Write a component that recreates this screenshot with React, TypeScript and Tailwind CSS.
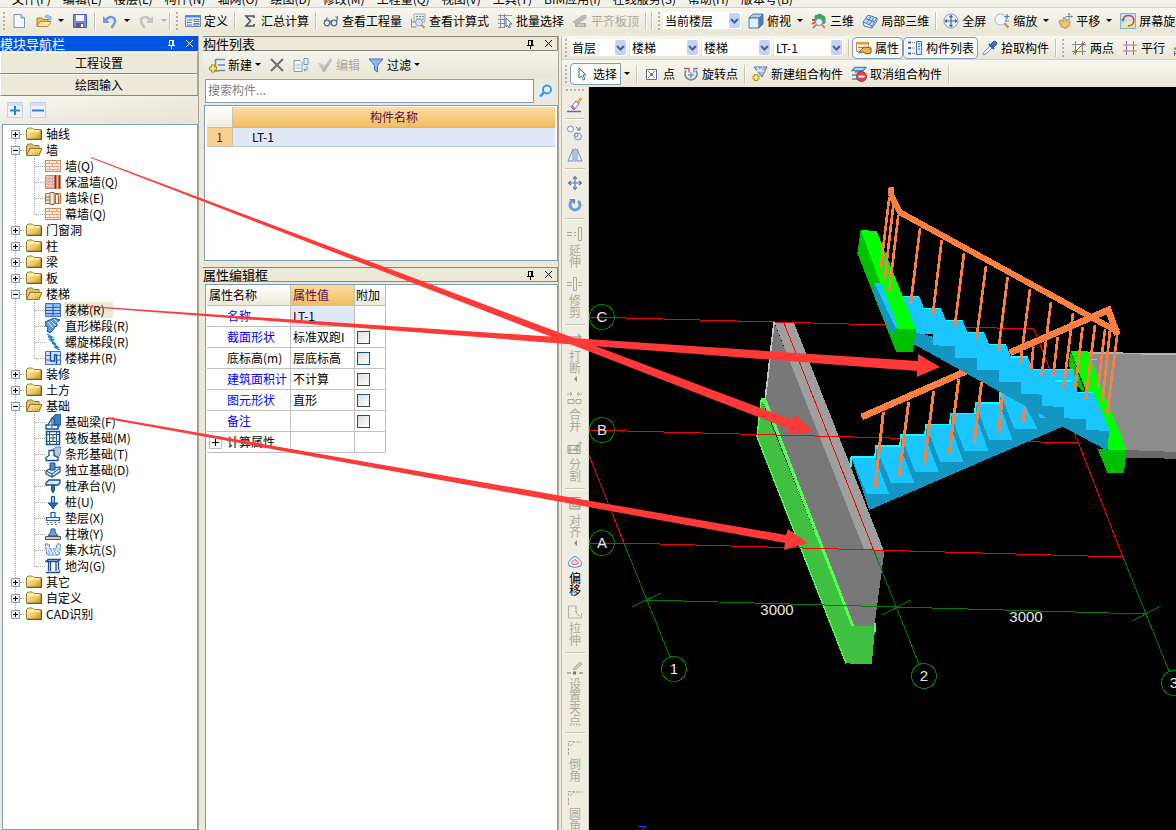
import { useState } from "react";
import type { ReactNode } from "react";
import clsx from "clsx";

const icons: Record<string, ReactNode> = {
  file: (
    <>
      <path d="M2 1.500h7l3.500 3.500v9.500H2z" fill="#f4f8ff" stroke="#7b93b5" />
      <path d="M9 1.500v3.500h3.500" fill="#c6d6ee" stroke="#7b93b5" />
    </>
  ),
  open: (
    <>
      <path d="M9 3c2-2 4-1 5 1l1-1v4h-4l1-1c-1-2-2-2-3-1z" fill="#9ec3e6" stroke="#6d8fb5" strokeWidth=".5" />
      <path d="M1 13v-8h5l1 1.500h5v6.500z" fill="#e7b95a" stroke="#a98135" />
      <path d="M1 13.500l3-5h11l-3 5z" fill="#ffe59a" stroke="#b98f3c" />
    </>
  ),
  save: (
    <>
      <path d="M1.500 1.500h13v13h-13z" fill="#7d85e0" stroke="#525ab0" />
      <path d="M4 2h8v6h-8z" fill="#f1f3ff" />
      <path d="M4 10h8v4h-8z" fill="#5a5f78" />
      <path d="M9 11h2v3h-2z" fill="#fff" />
    </>
  ),
  undo: (
    <>
      <path d="M4 7c3-4 9-4 9 1 0 3-2 4-3 6" fill="none" stroke="#6d9be0" strokeWidth="2.500" strokeLinecap="round" />
      <path d="M1 3v7h7z" fill="#6d9be0" />
    </>
  ),
  define: (
    <>
      <path d="M.5 2.500h15v11h-15z" fill="#e5edfa" stroke="#7489ad" />
      <path d="M.5 2.500h15v2h-15z" fill="#4c88e0" />
      <path d="M2 7h5M2 9.500h5M2 12h5" stroke="#5d77a8" />
      <path d="M9 6.500h5v2h-5zM9 10.500h5v1.500h-5z" fill="#fff" stroke="#5d77a8" />
    </>
  ),
  sigma: <path d="M12 5V3H4l4.500 5L4 13h8v-2" fill="none" stroke="#4a5060" strokeWidth="1.600" />,
  glasses: (
    <>
      <circle cx="4" cy="10" r="2.800" fill="#e8f0fa" stroke="#596a88" strokeWidth="1.300" />
      <circle cx="11" cy="10" r="2.800" fill="#e8f0fa" stroke="#596a88" strokeWidth="1.300" />
      <path d="M6.500 9q1-1 2 0M1.500 8.500l3-4M13.500 9l1-5h-2" fill="none" stroke="#596a88" strokeWidth="1.200" />
    </>
  ),
  formula: (
    <>
      <path d="M4 1h11v8h-11z" fill="#e9edf2" stroke="#a3a9b3" />
      <path d="M6 3.500h8M6 6h8" stroke="#7c838e" strokeDasharray="2 1" />
      <path d="M1.500 6v8h5M1.500 9h4" fill="none" stroke="#8a8f99" />
      <circle cx="9" cy="9.500" r="3.500" fill="#cfe2fb" stroke="#86a9dc" />
      <path d="M11.500 12l3 3" stroke="#d18a4a" strokeWidth="2" />
    </>
  ),
  batch: (
    <>
      <path d="M1 2.500h14M1 6.500h8M1 10.500h8M1 14.500h6M3.500 1v14M7.500 1v14" stroke="#8a93a5" />
      <path d="M9 5l6 6h-3l1.500 3-1.500 1-1.500-3-1.500 2z" fill="#fff" stroke="#5876ab" />
    </>
  ),
  flatTop: (
    <>
      <path d="M1 9l9-6 4-1v3l-9 6z" fill="#8f8c80" stroke="#716e64" />
      <path d="M3 10h11v4h-11z" fill="#716e64" />
      <path d="M5 12h7" stroke="#dedbd0" />
    </>
  ),
  cube: (
    <>
      <path d="M1 5l4-4h10l-4 4z" fill="#a9d1f5" stroke="#54789e" />
      <path d="M1 5h10v10H1z" fill="#e0effc" stroke="#54789e" />
      <path d="M11 5l4-4v10l-4 4z" fill="#4380bb" stroke="#54789e" />
    </>
  ),
  view3d: (
    <>
      <path d="M4 3l5-2 5 3v6l-5 2-5-3z" fill="#39a954" stroke="#4f9a63" />
      <path d="M1 7h3M1 11l5-3" stroke="#c9544b" strokeWidth="2" />
      <circle cx="8" cy="9" r="3.500" fill="#e6f2ff" stroke="#7a94b8" />
      <path d="M5.500 11.500L2 15M11 12l3 3" stroke="#c98a45" strokeWidth="2" />
    </>
  ),
  local3d: (
    <>
      <path d="M1 9l5-7 9 3-5 8z" fill="#bcd8f2" stroke="#4c7fb3" />
      <path d="M3.500 5.500l9 3.500M9 3.500l-4.500 7M12 4.500l-4.500 7M1 9l1 4 8 2v-2M10 15l5-7V5" fill="none" stroke="#4c7fb3" />
    </>
  ),
  fullscreen: (
    <>
      <circle cx="8" cy="8" r="7" fill="#e9f2fc" stroke="#7d99c2" />
      <path d="M8 2.500v11M2.500 8h11M6.500 4L8 2.500 9.500 4M6.500 12L8 13.500 9.500 12M4 6.500L2.500 8 4 9.500M12 6.500L13.500 8 12 9.500" fill="none" stroke="#3c669f" strokeWidth="1.200" />
    </>
  ),
  zoom: (
    <>
      <circle cx="6.500" cy="6.500" r="5.500" fill="#f2f7fd" stroke="#a6b3c6" />
      <path d="M10.500 10.500l4 4" stroke="#c7a162" strokeWidth="2.500" />
      <path d="M13 1v5M10.500 3.500h5M11 8h4" stroke="#4d7bbd" strokeWidth="1.200" />
    </>
  ),
  pan: (
    <>
      <path d="M2 8l2-1 2 2V5l2-.500 1 3 2-1 2 2-1 5-4 2-4-2z" fill="#e9c377" stroke="#b4935a" />
      <path d="M12 0v7M8.500 3.500h7M11 1.500l1-1 1 1M14.500 2.500l1 1-1 1" fill="none" stroke="#7186a8" />
    </>
  ),
  rotateView: (
    <>
      <path d="M.5.500h15v15H.500z" fill="#bfe6f5" stroke="#7db8d2" />
      <path d="M3 11h4V8h6v6H4z" fill="#f7e98a" />
      <path d="M3 7c1-6 10-6 11 0 0 4-3 6-6 6" fill="none" stroke="#e5413a" strokeWidth="1.600" />
      <path d="M1 6h4l-2 3z" fill="#e5413a" />
    </>
  ),
  props: (
    <>
      <path d="M.5 2.500h12v9H.500z" fill="#fbf3e0" stroke="#c88d3c" />
      <path d="M.5 2.500h12v2H.500z" fill="#e79a3a" />
      <path d="M2 7.500h5" stroke="#a98135" />
      <path d="M4 11l4-4 7 1v5l-5 1-3-2-4 1z" fill="#eab54f" stroke="#7c5a20" />
    </>
  ),
  list: (
    <>
      <path d="M1 2.500h3M1 8h3M1 13.500h3" stroke="#3d68a8" strokeWidth="2" />
      <path d="M5 2.500h3M5 8h3M5 13.500h3" stroke="#777" strokeDasharray="1 1" />
      <path d="M9.500 1.500h5v13h-5z" fill="#dbe7fa" stroke="#4472b5" />
      <path d="M11 4h2M11 6.500h2M11 9h2" stroke="#4472b5" />
    </>
  ),
  picker: (
    <>
      <path d="M1 15l1-3 7-7 2 2-7 7z" fill="#e3f0fc" stroke="#7497c4" />
      <path d="M7 4l5 5" stroke="#2f5d9c" strokeWidth="2" />
      <path d="M9 4l3-3q3 0 3 3l-3 3z" fill="#3f79c4" stroke="#2f5d9c" />
    </>
  ),
  twoPoint: (
    <>
      <path d="M4.500 1v14M11.500 1v14M1 4.500h14M1 11.500h14" stroke="#7c8499" />
      <path d="M2 14L14 2" stroke="#d0453b" />
      <circle cx="4.500" cy="11.500" r="1.500" fill="#3aa845" />
      <circle cx="11.500" cy="4.500" r="1.500" fill="#3aa845" />
    </>
  ),
  parallel: (
    <>
      <path d="M4.500 1v14M11.500 1v14" stroke="#6779a5" />
      <path d="M1 5h14M1 11h14" stroke="#c77878" />
    </>
  ),
  angle: (
    <>
      <path d="M1 8.500h3" stroke="#3cb54a" strokeWidth="2" />
      <path d="M1.500 11v5M2 13.500h10M5 12l-2 1.500L5 15" fill="none" stroke="#6b6b6b" />
    </>
  ),
  cursor: <path d="M5 2v10l2.500-2 2 4 1.500-1-2-4h3z" fill="#fff" stroke="#44689b" />,
  point: (
    <>
      <path d="M2.500 3.500h10v10h-10z" fill="#fff" stroke="#5b6ba0" />
      <path d="M4 5l7 7M11 5l-7 7" stroke="#7480b5" />
      <circle cx="7.500" cy="8.500" r="1.500" fill="#e04040" />
    </>
  ),
  rotatePoint: (
    <>
      <path d="M3 4.500a6 6 0 1 0 10 0" fill="none" stroke="#7688aa" strokeWidth="1.800" />
      <path d="M1 2.500h5v4" fill="none" stroke="#c05a4a" strokeWidth="1.300" />
      <path d="M15 2.500h-4v4" fill="none" stroke="#6d7fa3" strokeWidth="1.300" />
      <path d="M8 6v6M5 9h6" stroke="#4a76bb" />
    </>
  ),
  newGroup: (
    <>
      <path d="M2 1h13L10 11z" fill="#a9b9dd" stroke="#5c74a8" />
      <path d="M5 1l2.500 4L11 1M4.500 5h8" fill="none" stroke="#fff" />
      <path d="M4 8v7M.500 11.500h7" stroke="#b8912b" strokeWidth="4" />
      <path d="M4 9v5M1.500 11.500h5" stroke="#ffe676" strokeWidth="2" />
    </>
  ),
  cancelGroup: (
    <>
      <path d="M4 1.500h11l-3 3H1zM4 6h8M1 9h6M1 13h5" fill="#dcebfa" stroke="#4e88c0" strokeWidth="1.400" />
      <circle cx="10.500" cy="10.500" r="5" fill="#e04545" stroke="#b02c2c" />
      <path d="M7.500 10.500h6" stroke="#fff" strokeWidth="2" />
    </>
  ),
  newItem: (
    <>
      <path d="M7 2.500h9M9 8h7M9 13.500h7M6.500 2v12h3" fill="none" stroke="#6a8dbb" strokeWidth="1.500" />
      <path d="M4 7.500v8M0 11.500h8" stroke="#b3902e" strokeWidth="4" />
      <path d="M4 8.500v6M1 11.500h6" stroke="#ffe778" strokeWidth="2" />
    </>
  ),
  cross: <path d="M2 2l12 12M14 2L2 14" stroke="#6e6e6e" strokeWidth="2" />,
  copy: (
    <>
      <path d="M1 3.500h6l2 2v9H1z" fill="#f1f5fc" stroke="#8a9cbb" />
      <path d="M2.500 8h5M2.500 11h5" stroke="#9fb0cc" />
      <path d="M11 1.500h4v6h-4zM14 9v4h-3l1-1.500M11 13l1 1.500" fill="none" stroke="#6f94d6" />
    </>
  ),
  check: (
    <>
      <path d="M1 6l4 1 2 3L14 1l1 2-7 12H6z" fill="#8a877c" />
      <path d="M2 8h6M2 11h4" stroke="#c9c6ba" />
    </>
  ),
  filter: <path d="M1 2h14L9.500 8.500V15L6.500 13V8.500z" fill="#8fb6f2" stroke="#3f72c4" />,
  search: (
    <>
      <circle cx="9" cy="6.500" r="4" fill="#e8f6ff" stroke="#3c9ae3" strokeWidth="2" />
      <path d="M6 9.500l-4 4" stroke="#3c9ae3" strokeWidth="2.500" />
    </>
  ),
  eraser: (
    <>
      <path d="M14.500 1l-4 5" stroke="#dfb14d" strokeWidth="3" />
      <path d="M9 4l3 3-5 6-3-3z" fill="#f4f4f8" stroke="#6477a5" />
      <path d="M5 9l3 3" stroke="#d86aa0" strokeWidth="2" />
      <path d="M0 14.500h14" stroke="#4f74aa" strokeWidth="1.500" />
    </>
  ),
  duplicate: (
    <>
      <circle cx="3.500" cy="4" r="3" fill="#f5f8fc" stroke="#7f93b5" />
      <circle cx="11" cy="11.500" r="3.500" fill="#dfe8f5" stroke="#7f93b5" />
      <circle cx="9" cy="10" r="2" fill="none" stroke="#7f93b5" />
      <path d="M9 2l4 3M13 2v3h-3" fill="none" stroke="#55719e" />
    </>
  ),
  mirror: <path d="M6 2v12H1zM10 2v12h5zM8 1v14" fill="#e7eefa" stroke="#6e8bc0" />,
  move: (
    <path d="M8 2v12M2 8h12M6 4l2-2.500L10 4M6 12l2 2.500 2-2.500M4 6L1.500 8 4 10M12 6l2.500 2L12 10" fill="none" stroke="#5878ae" strokeWidth="1.200" />
  ),
  rotate: (
    <>
      <path d="M5 4a5 5 0 1 0 6 0" fill="none" stroke="#6e9ae6" strokeWidth="3" />
      <path d="M2 2h6v5z" fill="#5884d4" />
    </>
  ),
  extend: <path d="M0 6.500h5M0 9.500h5M7 6.500h2M7 9.500h2M11.500 1.500v13h3v-13z" fill="none" stroke="#aba89b" />,
  trim: <path d="M0 6.500h5M0 9.500h5M6.500 1.500v13h3v-13zM11 6.500h4M11 9.500h4" fill="none" stroke="#aba89b" />,
  breakAt: <path d="M1 5h13M11 2l3 3-3 3M1 11h5M9 11h6" fill="none" stroke="#aba89b" strokeWidth="1.500" />,
  merge: <path d="M0 4h5M3 2l2 2-2 2M15 4h-5M12 2l-2 2 2 2M1 9.500h6v4H1zM9 9.500h5v4H9z" fill="none" stroke="#aba89b" />,
  split: <path d="M1 5.500h12v8H1zM3 5v9M10 5v9M1 10h12M7 9l6-7 1.500 1-6 7z" fill="none" stroke="#9c998d" />,
  align: <path d="M2 1.500h12M3 5h10v8H3zM6 7.500h7v3H6z" fill="#dedbcd" stroke="#9c998d" />,
  offset: (
    <>
      <path d="M4 5q4-5 8 0 4 3 2 7-6 3-12 0-2-4 2-7z" fill="#e6f1fc" stroke="#5a8ed0" />
      <path d="M6 7q2-3 4 0 2 1 1 3-3 1-6 0-1-2 1-3z" fill="#fbd7d7" stroke="#dd6464" />
    </>
  ),
  stretch: (
    <>
      <path d="M1.500 2h8M1.500 2v12h13V9" fill="none" stroke="#b4b1a4" />
      <path d="M9 3v5M9 8l4 5" stroke="#8f8c80" strokeDasharray="2 1" />
    </>
  ),
  grip: (
    <>
      <path d="M0 13h4M12 13h4" stroke="#77746a" />
      <path d="M6 11.500h3v3H6z" fill="#77746a" />
      <path d="M6 9l7-7 2 2-7 6z" fill="#d2cfc3" stroke="#a5a296" />
    </>
  ),
  corner: <path d="M1.500 15V8M1.500 6V1.500H7M3 6l4-4h8" fill="none" stroke="#aba89b" strokeDasharray="3 1" />,
};

/* ---- tree drawings ---- */
const navy = "#164f96";

const treeIcons: Record<string, ReactNode> = {
  folder: (
    <>
      <path d="M.5 13V3.500L2 2h4.500L8 3.500h7V13z" fill="url(#folderGold)" stroke="#9b8444" />
      <path d="M1.500 5h12" stroke="#fff6cf" />
      <path d="M1 13.500h15M15.500 4v10" stroke="#6d5520" />
    </>
  ),
  folderOpen: (
    <>
      <path d="M.5 13V3.500L2 2h4.500L8 3.500h5V13z" fill="#dcc070" stroke="#8f7b40" />
      <path d="M.5 13.500L4 6.500h12l-3 7z" fill="url(#folderGold)" stroke="#8f7430" />
    </>
  ),
  wall: (
    <>
      <path d="M.5 2.500h15v11H.500z" fill="#fdf0e2" stroke="#c98457" />
      <path d="M0 5.500h16M0 8.500h16M0 11.500h16M4.500 2v3M11.500 2v3M7.500 5v3M4.500 8v3M12.500 8v3M8.500 11v3" stroke="#e3a077" />
    </>
  ),
  wallWarm: (
    <>
      <path d="M.5 1.500h9v13h-9z" fill="#f6d9d2" stroke="#cc8878" />
      <path d="M1 4h8M1 7h8M1 10h8M1 13h8M4 1v13M7 1v13" stroke="#cf8a80" strokeDasharray="2 1" />
      <path d="M10 1h6v14h-6z" fill="#e9a685" />
      <path d="M10.500 1v14M14.500 1v14" stroke="#8c2b17" strokeWidth="1.500" />
    </>
  ),
  pier: (
    <>
      <path d="M.5 3.500h15v10H.500z" fill="#fae4d0" stroke="#c56a35" />
      <path d="M5 2.500h4v12H5zM10.500 4.500h3v9h-3zM0 7h5M0 10h5" fill="#fff" stroke="#b45a2c" />
    </>
  ),
  stairs: (
    <>
      <path d="M.5 1.500h15v13H.500z" fill="#8db7ff" stroke="#3b6fd6" />
      <path d="M1 5.500h14M1 8.500h14M1 11.500h14M8 2v12" stroke="#2b5bc0" />
      <path d="M2 4h5M2 7h5M2 10h5M9 7h5M9 10h5" stroke="#dfeaff" />
    </>
  ),
  flight: (
    <>
      <path d="M0 4l9-4 6 2-3 3v3l-3 1v2l-4 4-3-2 1-4-3-1z" fill="#5b9be0" stroke={navy} />
      <path d="M3 4l5 6M6 3l5 5M9 1l4 4" stroke="#e5f2ff" />
    </>
  ),
  spiral: (
    <path d="M2 0l5 3-4 0 6 3-4 0 6 4-4-1 6 4-4 0 6 3" fill="none" stroke="#1a7fd0" strokeWidth="1.300" />
  ),
  stairWell: (
    <>
      <path d="M.5 1.500h15v13H.500z" fill="#cfe0fb" stroke="#3b6fd6" />
      <path d="M0 5.500h5M0 10h5M11 5.500h5M11 10h5" stroke="#3b6fd6" />
      <path d="M5.500 2v9h4V5h2v9" fill="none" stroke={navy} strokeWidth="1.400" />
    </>
  ),
  footBeam: (
    <>
      <path d="M7 4l4-4h5v10l-3 4z" fill="#3a82c8" stroke={navy} />
      <path d="M1 15v-4h2l4-7 2 1v6h4v4z" fill="#eef6ff" stroke={navy} strokeWidth="1.300" />
      <path d="M7 5v9M3 11h8" stroke={navy} />
    </>
  ),
  raft: (
    <>
      <path d="M1.500 1.500h13v13h-13z" fill="#fff" stroke={navy} strokeWidth="1.500" />
      <path d="M4.500 4.500h7v7h-7zM8 4v8M4 8h8M1 4.500h3M12 4.500h3M1 11.500h3M12 11.500h3M4.500 1v3M11.500 1v3M4.500 12v3M11.500 12v3" fill="none" stroke={navy} />
    </>
  ),
  strip: (
    <>
      <path d="M7 4l4-3h5v6l-4 6z" fill="#b8c7d8" stroke="#5f7ea5" />
      <path d="M1 14.500v-3l3-2V4.500h5v5l4 2v3z" fill="#fff" stroke={navy} strokeWidth="1.300" />
    </>
  ),
  isolated: (
    <>
      <path d="M1 9l5-3 9-1v5l-8 5-6-3z" fill="#d5e6f7" stroke={navy} strokeWidth="1.200" />
      <path d="M1 9l6 3 8-6M7 12v3" fill="none" stroke={navy} />
      <path d="M5 1h5v7H5z" fill="#4d87c4" stroke={navy} />
    </>
  ),
  cap: (
    <>
      <path d="M1 5l3-3h11v3l-2 2H1z" fill="#d9e9f8" stroke={navy} strokeWidth="1.300" />
      <path d="M6.500 7v5L8 15l1.500-3V7z" fill="#2b73b8" stroke={navy} />
    </>
  ),
  pile: (
    <>
      <path d="M6.500 2.500h3v7h-3z" fill="#9cc3ea" stroke={navy} />
      <path d="M3 9h10l-3 3-2 3-2-3z" fill="#2a69b0" stroke={navy} />
    </>
  ),
  cushion: (
    <>
      <path d="M6 2.500h4v5H6zM1.500 7.500h13v3h-13z" fill="#e6f1fd" stroke="#1e5cae" strokeWidth="1.200" />
      <path d="M1 12.500h14M2 14.500h12" stroke="#777" strokeDasharray="2 2" />
    </>
  ),
  pier2: (
    <>
      <path d="M6 3h4v3l3 4H3l3-4z" fill="#6f9fe0" stroke={navy} />
      <path d="M.5 10.500h15v3H.500z" fill="#c9c9c9" stroke="#555" />
    </>
  ),
  pit: (
    <>
      <path d="M0 2h4l1 5h6l1-5h4l-2 11H2z" fill="#d6e7fc" stroke="#3a79d0" strokeDasharray="3 1" />
      <path d="M3 9h10M4 11h8" stroke="#3a79d0" strokeDasharray="1 2" />
    </>
  ),
  trench: (
    <path d="M1 3.500l2-2h12l-2 2zM3.500 4v9M5.500 4v9M11 4v9M13.500 4v8M1 14.500h13l1-2" fill="#e3effc" stroke={navy} strokeWidth="1.300" />
  ),
};

function Icon({ name, dim = false }: { name: string; dim?: boolean }) {
  return (
    <svg viewBox="0 0 16 16" aria-hidden="true" className={clsx("size-4 shrink-0", dim && "opacity-50 grayscale")}>
      {icons[name] ?? treeIcons[name]}
    </svg>
  );
}

function Caret({ dim = false, tight = false }: { dim?: boolean; tight?: boolean }) {
  return (
    <svg viewBox="0 0 6 4" aria-hidden="true" className={clsx("h-1 w-[6px] shrink-0", !tight && "ml-[3px]")}>
      <path d="M0 0h6L3 3z" fill={dim ? "#b5b2a5" : "#000"} />
    </svg>
  );
}

interface ToolProps {
  icon: string;
  label?: string;
  title?: string;
  caret?: boolean;
  tight?: boolean;
  dim?: boolean;
  active?: boolean;
}

function Tool({ icon, label, title, caret, tight, dim, active }: ToolProps) {
  return (
    <button
      type="button"
      title={title ?? label}
      disabled={dim}
      className={clsx(
        "flex h-[22px] shrink-0 items-center gap-[3px] px-1",
        dim && "text-[#aca899]",
        active && "rounded-sm bg-[#f8f8f4] outline-1 -outline-offset-1 outline-[#7f9db9]"
      )}
    >
      <Icon name={icon} dim={dim} />
      {label}
      {caret && <Caret dim={dim} tight={tight} />}
    </button>
  );
}

function Divider() {
  return <span className="mx-[2px] h-[18px] w-[2px] shrink-0 border-r border-r-white bg-[#c5c2b0]" />;
}

function Grip() {
  return <span className="mx-[3px] h-[18px] shrink-0 border-l-2 border-dotted border-[#b5b2a3]" />;
}

interface ComboProps {
  label: string;
  value: string;
  options?: string[];
  size: string;
}

function Combo({ label, value, options = [], size }: ComboProps) {
  return (
    <span className={clsx("relative mr-[3px] flex h-[17px] shrink-0 bg-white", size)}>
      <select aria-label={label} defaultValue={value} className="w-full appearance-none pl-[2px] leading-4 outline-none">
        <option>{value}</option>
        {options.map((option) => (
          <option key={option}>{option}</option>
        ))}
      </select>
      <span className="pointer-events-none absolute inset-y-px right-px flex w-[11px] items-center justify-center rounded-xs bg-[#c1d2fb]">
        <svg viewBox="0 0 9 6" className="h-[6px] w-[9px]">
          <path d="M1 1l3.500 3.500L8 1" fill="none" stroke="#4d6185" strokeWidth="2" />
        </svg>
      </span>
    </span>
  );
}

const menus = [
  "文件(F)", "编辑(E)", "楼层(L)", "构件(N)", "轴网(O)", "绘图(D)", "修改(M)", "工程量(Q)",
  "视图(V)", "工具(T)", "BIM应用(I)", "在线服务(S)", "帮助(H)", "版本号(B)",
];

const barStyle = "flex shrink-0 items-center overflow-hidden bg-linear-to-b from-[#f8f7f0] to-[#e9e6d5]";

function MainToolbar() {
  return (
    <header className="shrink-0">
      <nav className="flex h-2 items-end gap-3 overflow-hidden border-b border-[#d5d2c0] bg-[#f3f2ea] pl-3">
        {menus.map((menu) => (
          <button key={menu} type="button" className="shrink-0 leading-4">
            {menu}
          </button>
        ))}
      </nav>
      <div className={clsx(barStyle, "h-[25px]")}>
        <Grip />
        <Tool icon="file" title="新建" />
        <Tool icon="open" title="打开" caret />
        <Tool icon="save" title="保存" />
        <Divider />
        <Tool icon="undo" title="撤销" caret />
        <span className="flex -scale-x-100">
          <Tool icon="undo" title="恢复" dim />
        </span>
        <Caret dim />
        <span className="w-[2px]" />
        <Divider />
        <Grip />
        <Tool icon="define" label="定义" />
        <Divider />
        <Tool icon="sigma" label="汇总计算" />
        <Divider />
        <Tool icon="glasses" label="查看工程量" />
        <Tool icon="formula" label="查看计算式" />
        <Tool icon="batch" label="批量选择" />
        <Tool icon="flatTop" label="平齐板顶" dim />
        <Divider />
        <span className="w-3" />
        <Divider />
        <Grip />
        <Combo label="楼层显示" value="当前楼层" options={["全部楼层"]} size="w-[78px]" />
        <Tool icon="cube" label="俯视" caret />
        <Tool icon="view3d" label="三维" />
        <Tool icon="local3d" label="局部三维" />
        <Divider />
        <Tool icon="fullscreen" label="全屏" />
        <Tool icon="zoom" label="缩放" caret />
        <Tool icon="pan" label="平移" caret />
        <Tool icon="rotateView" label="屏幕旋转" />
      </div>
    </header>
  );
}

function PanelTitle({ text, active = false }: { text: string; active?: boolean }) {
  return (
    <div
      className={clsx(
        "flex h-[15px] shrink-0 items-center text-[13px] leading-[15px]",
        active ? "bg-[#0054e3] text-white" : "border-y border-r border-[#8b8878]"
      )}
    >
      <h2 className="flex-1">{text}</h2>
      <button type="button" aria-label="固定" className="mr-[9px]">
        <svg viewBox="0 0 9 10" className="h-[10px] w-[9px]">
          <path d="M2.500 1v5M2 1.500h4M1 6.500h7M4.500 7v3" fill="none" stroke="currentColor" />
          <path d="M5 1h2v5H5z" fill="currentColor" />
        </svg>
      </button>
      <button type="button" aria-label="关闭" className="mr-1">
        <svg viewBox="0 0 9 9" className="size-[9px]">
          <path d="M1 1l7 7M8 1l-7 7" stroke="currentColor" />
        </svg>
      </button>
    </div>
  );
}

interface TreeGroup {
  name: string;
  children?: { name: string; icon: string }[];
}

const tree: TreeGroup[] = [
  { name: "轴线" },
  {
    name: "墙",
    children: [
      { name: "墙(Q)", icon: "wall" },
      { name: "保温墙(Q)", icon: "wallWarm" },
      { name: "墙垛(E)", icon: "pier" },
      { name: "幕墙(Q)", icon: "wall" },
    ],
  },
  { name: "门窗洞" },
  { name: "柱" },
  { name: "梁" },
  { name: "板" },
  {
    name: "楼梯",
    children: [
      { name: "楼梯(R)", icon: "stairs" },
      { name: "直形梯段(R)", icon: "flight" },
      { name: "螺旋梯段(R)", icon: "spiral" },
      { name: "楼梯井(R)", icon: "stairWell" },
    ],
  },
  { name: "装修" },
  { name: "土方" },
  {
    name: "基础",
    children: [
      { name: "基础梁(F)", icon: "footBeam" },
      { name: "筏板基础(M)", icon: "raft" },
      { name: "条形基础(T)", icon: "strip" },
      { name: "独立基础(D)", icon: "isolated" },
      { name: "桩承台(V)", icon: "cap" },
      { name: "桩(U)", icon: "pile" },
      { name: "垫层(X)", icon: "cushion" },
      { name: "柱墩(Y)", icon: "pier2" },
      { name: "集水坑(S)", icon: "pit" },
      { name: "地沟(G)", icon: "trench" },
    ],
  },
  { name: "其它" },
  { name: "自定义" },
  { name: "CAD识别" },
];

function Expander({ open }: { open: boolean }) {
  return (
    <svg viewBox="0 0 9 9" className="size-[9px] shrink-0">
      <path d="M.5.500h8v8h-8z" fill="#f3f1ea" stroke="#7f9db9" />
      <path d={open ? "M2 4.500h5" : "M2 4.500h5M4.500 2v5"} stroke="#000" />
    </svg>
  );
}

function ModuleTree() {
  const [selected, setSelected] = useState("楼梯(R)");
  const [openGroups, setOpenGroups] = useState(["墙", "楼梯", "基础"]);

  function toggle(name: string) {
    setOpenGroups((prev) =>
      prev.includes(name) ? prev.filter((item) => item !== name) : [...prev, name]
    );
  }

  return (
    <ul className="relative pt-px before:absolute before:top-2 before:bottom-2 before:left-3 before:border-l before:border-dotted before:border-[#aca899]">
      {/* shared fill of the folder icons */}
      <svg className="absolute size-0" aria-hidden="true">
        <linearGradient id="folderGold" x1="0" y1="0" x2="1" y2="1">
          <stop offset="0" stopColor="#fff3b4" />
          <stop offset="0.550" stopColor="#f3cd62" />
          <stop offset="1" stopColor="#c58a1e" />
        </linearGradient>
      </svg>
      {tree.map((group) => {
        const open = openGroups.includes(group.name);
        return (
          <li key={group.name}>
            <button type="button" onClick={() => toggle(group.name)} className="relative flex h-4 items-center pl-2">
              <Expander open={open && !!group.children} />
              <span className="w-[6px] border-t border-dotted border-[#aca899]" />
              <Icon name={open ? "folderOpen" : "folder"} />
              <span className="ml-1">{group.name}</span>
            </button>
            {open && group.children && (
              <ul className="relative before:absolute before:top-0 before:bottom-2 before:left-[31px] before:border-l before:border-dotted before:border-[#aca899]">
                {group.children.map((item) => (
                  <li key={item.name}>
                    <button type="button" onClick={() => setSelected(item.name)} className="flex h-4 items-center pl-8">
                      <span className="w-[10px] border-t border-dotted border-[#aca899]" />
                      <Icon name={item.icon} />
                      <span className={clsx("ml-[3px] pr-2 pl-px leading-4", selected === item.name && "bg-[#ece9d8]")}>
                        {item.name}
                      </span>
                    </button>
                  </li>
                ))}
              </ul>
            )}
          </li>
        );
      })}
    </ul>
  );
}

function ModulePanel() {
  return (
    <aside className="flex w-[199px] shrink-0 flex-col border-r border-[#aca899]">
      <PanelTitle text="模块导航栏" active />
      <div className="mt-px flex shrink-0 flex-col">
        {["工程设置", "绘图输入"].map((name) => (
          <button
            key={name}
            type="button"
            className="h-[22px] border-r border-b border-l border-r-[#aca899] border-b-[#8b8878] border-l-white shadow-[inset_0_1px_#fff]"
          >
            {name}
          </button>
        ))}
      </div>
      <div className="flex h-7 shrink-0 items-center gap-[7px] bg-linear-to-br from-[#f8f7f2] to-[#e6e3d0] pl-[7px]">
        {[true, false].map((plus) => (
          <button key={String(plus)} type="button" aria-label={plus ? "展开" : "折叠"}>
            <svg viewBox="0 0 16 16" className="size-4">
              <path d="M.5.500h15v15H.500z" fill="#edf2ff" stroke="#c3d0f0" />
              <path d="M1 1h14v3H1z" fill="#d3deff" />
              <path d={plus ? "M3 8.500h10M8 4v9" : "M2 8.500h12"} stroke="#3282b8" strokeWidth="2" />
            </svg>
          </button>
        ))}
      </div>
      <div className="ml-[2px] min-h-0 flex-1 overflow-hidden border border-[#7f9db9] bg-white">
        <ModuleTree />
      </div>
    </aside>
  );
}

function ComponentList() {
  return (
    <section className="flex h-[225px] shrink-0 flex-col">
      <PanelTitle text="构件列表" />
      <div className="flex h-[27px] shrink-0 items-center bg-linear-to-b from-[#f5f4ec] to-[#e9e6d5] pl-[2px]">
        <Tool icon="newItem" label="新建" caret tight />
        <Tool icon="cross" title="删除" />
        <Tool icon="copy" title="复制" />
        <Tool icon="check" label="编辑" dim />
        <Tool icon="filter" label="过滤" caret tight />
      </div>
      <div className="flex h-[26px] shrink-0 items-center gap-1 pl-[2px]">
        <input
          aria-label="搜索构件"
          placeholder="搜索构件..."
          className="h-6 w-[329px] border border-[#7f9db9] bg-white px-[2px] pb-1 placeholder:text-[#808080]"
        />
        <button type="button" aria-label="搜索" className="bg-[#e3eefa]">
          <Icon name="search" />
        </button>
      </div>
      <div className="mt-px ml-px min-h-0 flex-1 border border-[#7f9db9] bg-white px-[2px] pt-px">
        <table className="w-full table-fixed border-separate border-spacing-0">
          <thead>
            <tr className="h-[21px]">
              <th className="w-[26px] border-r border-b border-[#c5c2b0] bg-linear-to-b from-white to-[#efede2]" />
              <th className="border-b border-[#d8b878] bg-linear-to-b from-[#fbdca2] to-[#f2bd5e] p-0 font-normal text-[#5c0a4a]">
                构件名称
              </th>
            </tr>
          </thead>
          <tbody>
            <tr className="h-[19px]">
              <td className="border-r border-b border-[#c5c2b0] bg-[#fbd08c] p-0 text-center text-[#7a1500]">1</td>
              <td className="border-b border-[#c0c8d8] bg-[#dfe8f6] p-0 pl-[19px]">LT-1</td>
            </tr>
          </tbody>
        </table>
      </div>
    </section>
  );
}

interface PropertyRow {
  name: string;
  value: string;
  plain?: boolean;
  box?: boolean;
  expandable?: boolean;
}

const properties: PropertyRow[] = [
  { name: "名称", value: "LT-1" },
  { name: "截面形状", value: "标准双跑I", box: true },
  { name: "底标高(m)", value: "层底标高", plain: true, box: true },
  { name: "建筑面积计", value: "不计算", box: true },
  { name: "图元形状", value: "直形", box: true },
  { name: "备注", value: "", box: true },
  { name: "计算属性", value: "", plain: true, expandable: true },
];

const cell = "overflow-hidden border-r border-b border-[#c0c0c0] p-0 whitespace-nowrap";

function PropertyEditor() {
  return (
    <section className="mt-[6px] flex min-h-0 flex-1 flex-col">
      <PanelTitle text="属性编辑框" />
      <div className="mt-[2px] ml-[2px] min-h-0 flex-1 border border-b-0 border-[#7f9db9] bg-white pl-px">
        <table className="w-[179px] table-fixed border-separate border-spacing-0">
          <thead>
            <tr className="h-[21px] text-left">
              <th className={clsx(cell, "w-[84px] bg-linear-to-b from-white to-[#ece9d8] pl-[2px] font-normal")}>属性名称</th>
              <th className={clsx(cell, "w-16 bg-linear-to-b from-[#fbdca2] to-[#f2bd5e] pl-[2px] font-normal text-[#5c0a4a]")}>
                属性值
              </th>
              <th className={clsx(cell, "bg-linear-to-b from-white to-[#ece9d8] pl-px font-normal")}>附加</th>
            </tr>
          </thead>
          <tbody>
            {properties.map((row, index) => (
              <tr key={row.name} className="h-[21px]">
                <td className={clsx(cell, !row.plain && "text-[#0000ff]")}>
                  <span className="flex items-center">
                    <span className="flex w-5 shrink-0 pl-[2px]">
                      {row.expandable && (
                        <button type="button" aria-label="展开计算属性" className="size-[13px] border border-[#c0c0c0] bg-white">
                          <svg viewBox="0 0 11 11" className="size-[11px]">
                            <path d="M2 5.500h7M5.500 2v7" stroke="#000" />
                          </svg>
                        </button>
                      )}
                    </span>
                    {row.name}
                  </span>
                </td>
                <td className={clsx(cell, "pl-[2px]", index === 0 && "bg-[#dfe8f6]")}>{row.value}</td>
                <td className={cell}>
                  {row.box && (
                    <input
                      type="checkbox"
                      aria-label={`附加 ${row.name}`}
                      className="ml-[2px] block size-[13px] appearance-none border border-[#1c5180] bg-linear-to-br from-[#dcdcd7] to-white checked:bg-[#21a121]"
                    />
                  )}
                </td>
              </tr>
            ))}
          </tbody>
        </table>
      </div>
    </section>
  );
}

function DrawToolbars() {
  return (
    <div className="shrink-0 border-l border-[#c5c2b0]">
      <div className={clsx(barStyle, "h-6 border-b border-[#d5d2c0]")}>
        <Grip />
        <Combo label="楼层" value="首层" options={["基础层", "第2层"]} size="w-[57px]" />
        <Combo label="构件类别" value="楼梯" options={["墙", "柱"]} size="w-[69px]" />
        <Combo label="构件类型" value="楼梯" options={["直形梯段"]} size="w-[69px]" />
        <Combo label="构件" value="LT-1" size="w-[69px]" />
        <Divider />
        <Tool icon="props" label="属性" active />
        <Tool icon="list" label="构件列表" active />
        <Tool icon="picker" label="拾取构件" />
        <Divider />
        <Grip />
        <Tool icon="twoPoint" label="两点" />
        <Tool icon="parallel" label="平行" />
        <Tool icon="angle" title="点角" />
      </div>
      <div className={clsx(barStyle, "h-[27px]")}>
        <Grip />
        <button type="button" className="flex h-[22px] w-[51px] items-center gap-[3px] rounded-l-sm border border-[#7f9db9] bg-[#fafaf7] pl-[3px] whitespace-nowrap">
          <Icon name="cursor" />
          选择
        </button>
        <button type="button" aria-label="选择方式" className="h-[22px] pr-1">
          <Caret />
        </button>
        <Divider />
        <Tool icon="point" label="点" />
        <Tool icon="rotatePoint" label="旋转点" />
        <Divider />
        <Tool icon="newGroup" label="新建组合构件" />
        <Tool icon="cancelGroup" label="取消组合构件" />
        <Divider />
      </div>
    </div>
  );
}

interface SideTool {
  icon?: string;
  label?: string;
  title?: string;
  enabled?: boolean;
  more?: boolean;
}

// An empty entry is a separator line.
const sideTools: SideTool[] = [
  { icon: "eraser", title: "删除" },
  {},
  { icon: "duplicate", title: "复制" },
  { icon: "mirror", title: "镜像" },
  {},
  { icon: "move", title: "移动" },
  { icon: "rotate", title: "旋转" },
  {},
  { icon: "extend", label: "延伸" },
  { icon: "trim", label: "修剪" },
  {},
  { icon: "breakAt", label: "打断", more: true },
  { icon: "merge", label: "合并" },
  { icon: "split", label: "分割" },
  {},
  { icon: "align", label: "对齐", more: true },
  { icon: "offset", label: "偏移", enabled: true },
  { icon: "stretch", label: "拉伸" },
  {},
  { icon: "grip", label: "设置夹点" },
  {},
  { icon: "corner", label: "倒角" },
  { icon: "corner", label: "圆角" },
];

function SideToolbar() {
  return (
    <div className="flex w-7 shrink-0 flex-col items-center overflow-hidden border-x border-l-[#c5c2b0] border-r-[#d5d2c0] bg-[#efede2] pt-[2px]">
      <span className="mb-[3px] w-[18px] shrink-0 border-t-2 border-dotted border-[#b5b2a3]" />
      {sideTools.map((tool, index) =>
        tool.icon ? (
          <button
            key={index}
            type="button"
            title={tool.title ?? tool.label}
            className={clsx(
              "flex shrink-0 flex-col items-center gap-[2px]",
              tool.label ? "py-1" : "py-[3px]",
              tool.enabled ? "text-black" : "text-[#aca899]"
            )}
          >
            <Icon name={tool.icon} />
            {tool.label && <span className="w-3 leading-3 break-all whitespace-normal">{tool.label}</span>}
            {tool.more && (
              <svg viewBox="0 0 4 6" className="h-[6px] w-1">
                <path d="M4 0v6L1 3z" fill="#8f8c80" />
              </svg>
            )}
          </button>
        ) : (
          <span key={index} className="my-[2px] h-[2px] w-5 shrink-0 border-b border-b-white bg-[#c5c2b0]" />
        )
      )}
    </div>
  );
}

const axisMarks = [
  { label: "C", x: 602, y: 317 },
  { label: "B", x: 602, y: 430 },
  { label: "A", x: 602, y: 543 },
  { label: "1", x: 674, y: 669 },
  { label: "2", x: 924, y: 676 },
  { label: "3", x: 1174, y: 683 },
];

const treads = [
  "35,862 105,862 147,971 80,971",
  "108,830 180,830 222,938 152,938",
  "183,797 255,797 297,907 226,907",
  "258,765 330,765 370,875 300,875",
  "332,732 405,732 445,842 373,842",
  "407,700 478,700 518,810 447,810",
  "480,667 552,700 593,777 523,777",
];

const backBalusters = "M580 530L574 600M653 500L640 618M728 470L706 655";
const frontBalusters =
  "M148 80L122 297M160 105L134 328M175 135L148 364M240 175L212 402M305 210L278 437M372 250L344 472M438 288L409 508M503 320L475 545M570 358L541 580M633 395L605 615M699 430L671 652M765 465L737 690M795 478L774 655M810 480L788 692M832 492L802 728";
const lowBalusters =
  "M130 727L105 950M206 695L178 915M281 662L253 885M356 628L328 850M425 635L402 820M488 670L476 788M554 710L550 753";

function StairModel() {
  return (
    <svg x="840" y="170" width="336" height="350" viewBox="0 0 1008 1050" shapeRendering="crispEdges">
      {/* landing slab and its beam */}
      <path d="M743 548L1008 553V846L860 840z" fill="#8c8c8c" />
      <path d="M743 548L1008 553" stroke="#b5b5b5" strokeWidth="5" />
      <path d="M860 840L1008 846V866L857 864z" fill="#696969" />
      <path d="M692 543H743L860 840H806z" fill="#00ff00" />
      <path d="M692 545L735 668 700 640 686 580z" fill="#00c800" />
      <path d="M772 835L806 840H860L852 908H802z" fill="#00c000" />

      {/* lower flight */}
      <path
        d="M33 860H105L108 828H180L183 795H255L258 763H330L332 730H405L407 698H478L480 665 560 700 668 770 88 1020z"
        fill="#1496c3"
      />
      {treads.map((points) => (
        <polygon key={points} points={points} fill="#1ac6ff" />
      ))}
      <path
        d="M32 893L34 860H105L108 828H180L183 795H255L258 763H330L332 730H405L407 698H478L480 665"
        fill="none"
        stroke="#1ff"
        strokeWidth="5"
      />
      <path d="M594 729L622 744H600z" fill="#1ac6ff" />
      <g fill="none" stroke="#ff7f40">
        <path d={lowBalusters} strokeWidth="9" />
        <path d="M65 741L382 602" strokeWidth="20" />
      </g>

      {/* upper flight */}
      <path d="M222 485V523L668 770 802 842 808 780 500 560z" fill="#1496c3" />
      <path
        d="M187 379H238L252 415H303L318 451H368L383 487H433L448 524H498L513 561H563L580 598H700L712 668H760L810 782 738 781V747L672 745V711L606 708V674L542 671V637L477 635V601L411 599V565L345 563V528L279 526V492L225 490z"
        fill="#1ac6ff"
      />
      <path
        d="M187 379H238M252 415H303M318 451H368M383 487H433M448 524H498M513 561H563M580 598H700M645 633H695M710 668H760M738 568H772"
        stroke="#1ff"
        strokeWidth="4"
      />

      {/* upper beam */}
      <path d="M62 180L110 183 228 478H170z" fill="#00ff00" />
      <path d="M62 180L52 250 168 545H218L228 478H172z" fill="#00c000" />
      <path d="M104 343L110 350 166 470V490L148 483 100 368z" fill="#1496c3" />
      <path d="M102 340H124L172 465V478L160 460 110 352z" fill="#1ac6ff" />

      <g fill="none" stroke="#ff7f40">
        <path d={backBalusters} strokeWidth="8" />
        <path d={frontBalusters} strokeWidth="8" />
        <path d="M510 548L805 420 832 494" strokeWidth="20" />
        <path d="M152 52L155 80 180 127 755 442 835 486" strokeWidth="18" />
      </g>
    </svg>
  );
}

function Viewport() {
  return (
    <main className="min-w-0 flex-1 overflow-hidden bg-black">
      <svg viewBox="589 87 587 743" preserveAspectRatio="xMinYMin meet" className="size-full">
        {/* wall with its strip foundation */}
        <svg x="586" y="300" width="320" height="380" viewBox="0 0 960 1140" shapeRendering="crispEdges">
          <path d="M565 68L538 295 803 978 865 980 893 770V750L835 740z" fill="#787878" />
          <path d="M565 66H623L893 750H835z" fill="#9f9f9f" />
          <path d="M564 66L538 295" stroke="#c4c4c4" strokeWidth="5" />
          <path d="M525 295L513 410 780 1090 857 1093 869 970 865 980 797 976z" fill="#40c040" />
          <path d="M525 295H540L805 978H796L552 355z" fill="#55ff55" />
          <path d="M526 295L513 410 780 1090M867 970V995" fill="none" stroke="#55ff55" strokeWidth="4" />
        </svg>

        <g fill="none" stroke="#ff0000" shapeRendering="crispEdges">
          <path d="M589 317L1034 329M589 430L1078 443M624 543L1123 557M1034 329L1123 557M784 323L874 551M589 455L624 543" />
        </g>
        <g fill="none" stroke="#008000" shapeRendering="crispEdges">
          <path d="M589 543H624L670 657M874 551L919 664M1123 557L1169 671M647 600L1146 614" />
          <path d="M632 607L661 593M882 615L911 600M1132 621L1161 606" />
          {axisMarks.map((mark) => (
            <circle key={mark.label} cx={mark.x} cy={mark.y} r="12.500" />
          ))}
        </g>
        <g fill="#e8e8e8" fontSize="15" textAnchor="middle" className="font-['Liberation_Sans',sans-serif]">
          {axisMarks.map((mark) => (
            <text key={mark.label} x={mark.x} y={mark.y + 5}>
              {mark.label}
            </text>
          ))}
          <text x="777" y="615">3000</text>
          <text x="1026" y="622">3000</text>
        </g>
        <StairModel />
        <path d="M638 826.500H646L641 831" fill="none" stroke="#2040ff" />
      </svg>
    </main>
  );
}

// Red arrows from the module tree to the matching parts of the model.
function Annotations() {
  return (
    <svg
      viewBox="0 0 1176 830"
      preserveAspectRatio="xMinYMin meet"
      className="pointer-events-none absolute inset-0 size-full"
      fill="#fd3a37"
    >
      <path d="M91 157L793 420 795 414 814 432 788 434 789 429 91 158z" />
      <path d="M88 306L918 361V354L940 367 917 377V371L88 307z" />
      <path d="M108 417L786 535 788 529 808 543 784 550 785 543 108 419z" />
    </svg>
  );
}

export default function App() {
  return (
    <div className="relative flex h-screen flex-col overflow-hidden bg-[#ece9d8] font-['Noto_Sans_CJK_SC',sans-serif] text-[12px] leading-4 whitespace-nowrap text-black">
      <MainToolbar />
      <div className="flex min-h-0 flex-1 pt-[3px]">
        <ModulePanel />
        <div className="ml-1 flex w-[356px] shrink-0 flex-col border-r border-[#aca899]">
          <ComponentList />
          <PropertyEditor />
        </div>
        <div className="ml-[2px] flex min-w-0 flex-1 flex-col">
          <DrawToolbars />
          <div className="flex min-h-0 flex-1">
            <SideToolbar />
            <Viewport />
          </div>
        </div>
      </div>
      <Annotations />
    </div>
  );
}
